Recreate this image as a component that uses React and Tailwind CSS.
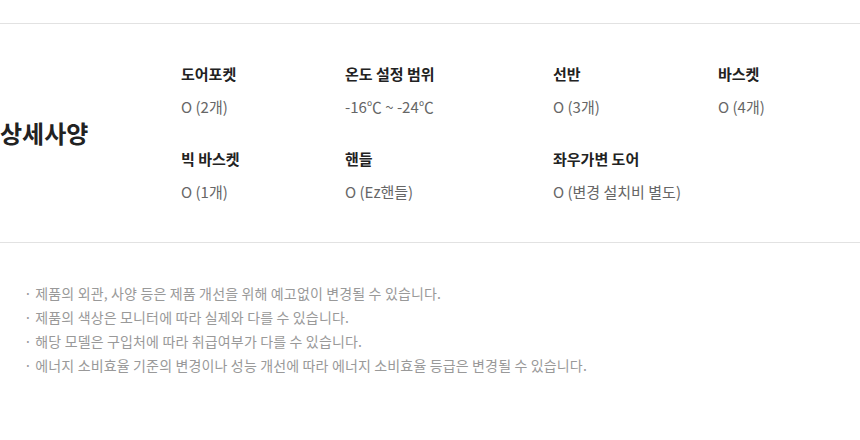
import React from "react";

const specs = [
  { label: "도어포켓", value: "O (2개)" },
  { label: "온도 설정 범위", value: "-16℃ ~ -24℃" },
  { label: "선반", value: "O (3개)" },
  { label: "바스켓", value: "O (4개)" },
  { label: "빅 바스켓", value: "O (1개)" },
  { label: "핸들", value: "O (Ez핸들)" },
  { label: "좌우가변 도어", value: "O (변경 설치비 별도)" },
];

const notes = [
  "제품의 외관, 사양 등은 제품 개선을 위해 예고없이 변경될 수 있습니다.",
  "제품의 색상은 모니터에 따라 실제와 다를 수 있습니다.",
  "해당 모델은 구입처에 따라 취급여부가 다를 수 있습니다.",
  "에너지 소비효율 기준의 변경이나 성능 개선에 따라 에너지 소비효율 등급은 변경될 수 있습니다.",
];

export default function App() {
  return (
    <div
      className="w-[860px] h-[440px] bg-white overflow-hidden pt-[23px]"
      style={{ fontFamily: '"Noto Sans CJK KR", "Noto Sans", sans-serif' }}
    >
      <div className="flex items-center border-t border-b border-[#e2e2e2] py-[40px]">
        <div className="w-[181px] shrink-0 text-[24px] leading-[28px] font-bold text-[#222]">
          상세사양
        </div>
        <div className="grid grid-cols-[164px_208px_165px_1fr] gap-y-[32px]">
          {specs.map((s) => (
            <div key={s.label} className="flex flex-col">
              <div className="text-[15px] leading-[20px] font-bold text-[#222]">
                {s.label}
              </div>
              <div className="mt-[13px] text-[15px] leading-[20px] text-[#666]">
                {s.value}
              </div>
            </div>
          ))}
        </div>
      </div>
      <ul className="pt-[38px] pl-[24px]">
        {notes.map((n) => (
          <li key={n} className="text-[14px] leading-[24px] text-[#999] tracking-[0.15px]">
            · {n}
          </li>
        ))}
      </ul>
    </div>
  );
}
